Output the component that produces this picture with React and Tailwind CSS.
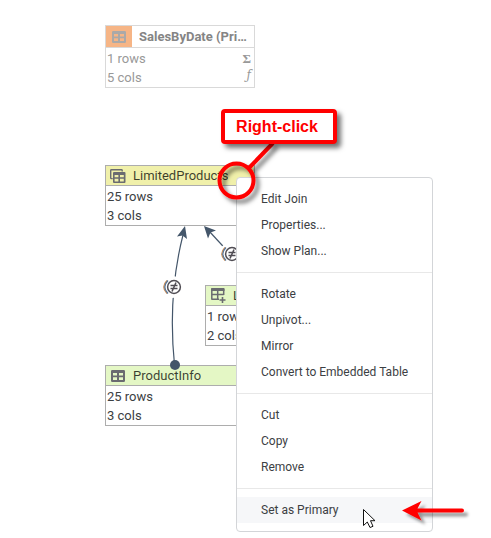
import React from "react";

function TableIcon({ className }) {
  return (
    <svg viewBox="0 0 14 12" className={className} aria-hidden="true">
      <path
        fill="currentColor"
        fillRule="evenodd"
        d="M1.300 0h11.400Q14 0 14 1.300v9.400Q14 12 12.700 12H1.300Q0 12 0 10.700V1.300Q0 0 1.300 0zM2 3v2.500h4V3zM8 3v2.500h4V3zM2 7.300v2.700h4V7.300zM8 7.300v2.700h4V7.300z"
      />
    </svg>
  );
}

function CopiedTableIcon({ className }) {
  return (
    <svg viewBox="0 0 16 14" className={className} aria-hidden="true">
      <path fill="none" stroke="currentColor" strokeWidth="1.4" d="M2.700 9.600H1.400Q.7 9.600.7 8.900V1.400Q.7.7 1.400.7H11.500Q12.200.7 12.200 1.400V2.500" />
      <path
        fill="currentColor"
        fillRule="evenodd"
        d="M4 3h10.500q1 0 1 1v9q0 1-1 1H4q-1 0-1-1V4q0-1 1-1zM4.600 6v2.200h3.800V6zM10 6v2.200h3.800V6zM4.600 9.800v2.600h3.800V9.800zM10 9.800v2.600h3.800V9.800z"
      />
    </svg>
  );
}

function AddTableIcon({ className }) {
  return (
    <svg viewBox="0 0 15 15" className={className} aria-hidden="true">
      <path fill="none" stroke="currentColor" strokeWidth="1.500" d="M8 11.300H1.300Q.8 11.300.8 10.700V1.300Q.8.8 1.300.8H12.200Q12.700.8 12.700 1.300V7M.8 6.500H12.700M6.700 2V11.300" />
      <path fill="currentColor" d="M1 0h11.500q1 0 1 1v2H0V1q0-1 1-1z" />
      <path fill="none" stroke="currentColor" strokeWidth="1.600" d="M11.500 9v6M8.500 12h6" />
    </svg>
  );
}

function TableNode({ name, rows, cols, icon, place, tone }) {
  return (
    <section className={`absolute w-[150px] border border-[#adadad] bg-white text-[#3c4043] ${place}`}>
      <header className={`flex h-5 items-center gap-[7px] border-b border-[#adadad] pl-1 text-black/75 ${tone}`}>
        <span className="flex h-full w-4 items-center justify-center text-[#6a6b70]">{icon}</span>
        <h2 className="truncate">{name}</h2>
      </header>
      <p className="h-[19px] px-px leading-[22px]">{rows}</p>
      <p className="h-5 px-px leading-[22px]">{cols}</p>
    </section>
  );
}

function PrimaryNode() {
  return (
    <section className="absolute top-[25px] left-[105px] w-[150px] border border-[#d9d9d9] bg-white text-[#999]">
      <header className="flex h-[22px] items-center gap-[7px] border-b border-[#d9d9d9]">
        <span className="flex h-full w-[26px] shrink-0 items-center justify-center bg-[#f6b586] text-[#aaa9a9]">
          <TableIcon className="h-3 w-3.5" />
        </span>
        <h2 className="truncate font-bold text-[#858585]">SalesByDate (Primary)</h2>
      </header>
      <div className="flex h-[19px] justify-between px-px leading-[22px]">
        <span>1 rows</span>
        <span className="pr-0.5 font-['Liberation_Serif',serif] font-bold">Σ</span>
      </div>
      <div className="flex h-5 justify-between px-px leading-[22px]">
        <span>5 cols</span>
        <span className="pr-0.5 font-['DejaVu_Serif',serif] text-xs italic">ƒ</span>
      </div>
    </section>
  );
}

function JoinBadge({ x, y }) {
  return (
    <g transform={`translate(${x} ${y})`} fill="none" stroke="#504d54">
      <circle cx="-2" r="11" fill="#fff" stroke="none" />
      <path d="M-7-6.500Q-13.500 0-7 6.500" stroke="#d08f55" strokeWidth="1.300" />
      <path d="M-6-6.500Q-12.500 0-6 6.500" stroke="#55759a" strokeWidth="1.300" />
      <circle r="6.400" strokeWidth="1.500" />
      <path d="M-3.500-1.500h7M-3.500 1.500h7M2-4.500-2 4.500" strokeWidth="1.500" />
    </g>
  );
}

function Links() {
  return (
    <svg className="absolute top-0 left-0 h-[538px] w-[491px]" aria-hidden="true">
      <g fill="none" stroke="#44566a" strokeWidth="1.200">
        <path d="M174.500 365Q167.500 296 183 235" />
        <path d="M209 231 232 256" />
      </g>
      <g fill="#44566a">
        <path d="M185 226 187 239 182.500 235.500 177 236.500z" />
        <path d="M204 226 216 230.500 210.500 232.500 208 238.500z" />
        <circle cx="175" cy="365" r="5" />
      </g>
      <JoinBadge x={174} y={287} />
      <JoinBadge x={232} y={254} />
    </svg>
  );
}

const groups = [
  ["Edit Join", "Properties...", "Show Plan..."],
  ["Rotate", "Unpivot...", "Mirror", "Convert to Embedded Table"],
  ["Cut", "Copy", "Remove"],
  ["Set as Primary"],
];

function ContextMenu() {
  return (
    <div
      role="menu"
      className="absolute top-[177px] left-[236px] w-[197px] divide-y divide-[#e8e8e8] rounded border border-[#d3d5d8] bg-white text-xs text-[#3c4043]"
    >
      {groups.map((items) => (
        <div key={items[0]} role="group" className="py-2">
          {items.map((label) => (
            <button
              key={label}
              role="menuitem"
              className={`block h-[26px] w-full pl-6 text-left whitespace-nowrap ${label === "Set as Primary" ? "bg-[#f6f7f9]" : "hover:bg-[#f6f7f9]"}`}
            >
              {label}
            </button>
          ))}
        </div>
      ))}
    </div>
  );
}

function Annotations() {
  return (
    <>
      <svg className="pointer-events-none absolute top-0 left-0 h-[538px] w-[491px]" aria-hidden="true">
        <defs>
          <filter id="shade" x="-20%" y="-20%" width="150%" height="150%">
            <feDropShadow dx="4" dy="4" stdDeviation="2" floodColor="#000" floodOpacity="0.5" />
          </filter>
          <filter id="arrow-shade" x="-20%" y="-20%" width="150%" height="200%">
            <feDropShadow dx="4" dy="4" stdDeviation="1.500" floodColor="#000" floodOpacity="0.4" />
          </filter>
        </defs>
        <g filter="url(#shade)">
          <path d="M273 143 248 169" stroke="#f00" strokeWidth="4" />
          <circle cx="236.500" cy="180.500" r="17" fill="none" stroke="#f00" strokeWidth="4" />
        </g>
        <path
          filter="url(#arrow-shade)"
          fill="#f00"
          d="M402 510.500 421.500 501 417.500 508.500H462Q464 508.500 464 510.500T462 512.500H417.500L421.500 520.500z"
        />
        <path d="M363.500 509.500V525.500L367.300 522 370 527.500 373 526.300 370.500 520.700H375z" fill="#fff" stroke="#111" strokeWidth="1" />
      </svg>
      <div className="absolute top-[109px] left-[221px] flex h-[35px] w-[116px] items-center justify-center rounded border-4 border-[#f00] bg-white pr-1 font-['Liberation_Sans',Arial,sans-serif] text-base font-bold text-[#f00] shadow-[4px_4px_5px_rgba(0,0,0,0.55)]">
        Right-click
      </div>
    </>
  );
}

export default function App() {
  return (
    <main className="relative min-h-screen overflow-hidden bg-white font-[Roboto,sans-serif] text-[13px]">
      <PrimaryNode />
      <TableNode
        name="LimitedProducts"
        rows="25 rows"
        cols="3 cols"
        place="top-[165px] left-[105px]"
        tone="bg-[#f0f0aa]"
        icon={<CopiedTableIcon className="h-3.5 w-4" />}
      />
      <TableNode
        name="LookupTable"
        rows="1 rows"
        cols="2 cols"
        place="top-[285px] left-[205px]"
        tone="bg-[#e4f7c5]"
        icon={<AddTableIcon className="size-[15px]" />}
      />
      <TableNode
        name="ProductInfo"
        rows="25 rows"
        cols="3 cols"
        place="top-[365px] left-[105px]"
        tone="bg-[#e4f7c5]"
        icon={<TableIcon className="h-3 w-3.5" />}
      />
      <Links />
      <ContextMenu />
      <Annotations />
    </main>
  );
}
